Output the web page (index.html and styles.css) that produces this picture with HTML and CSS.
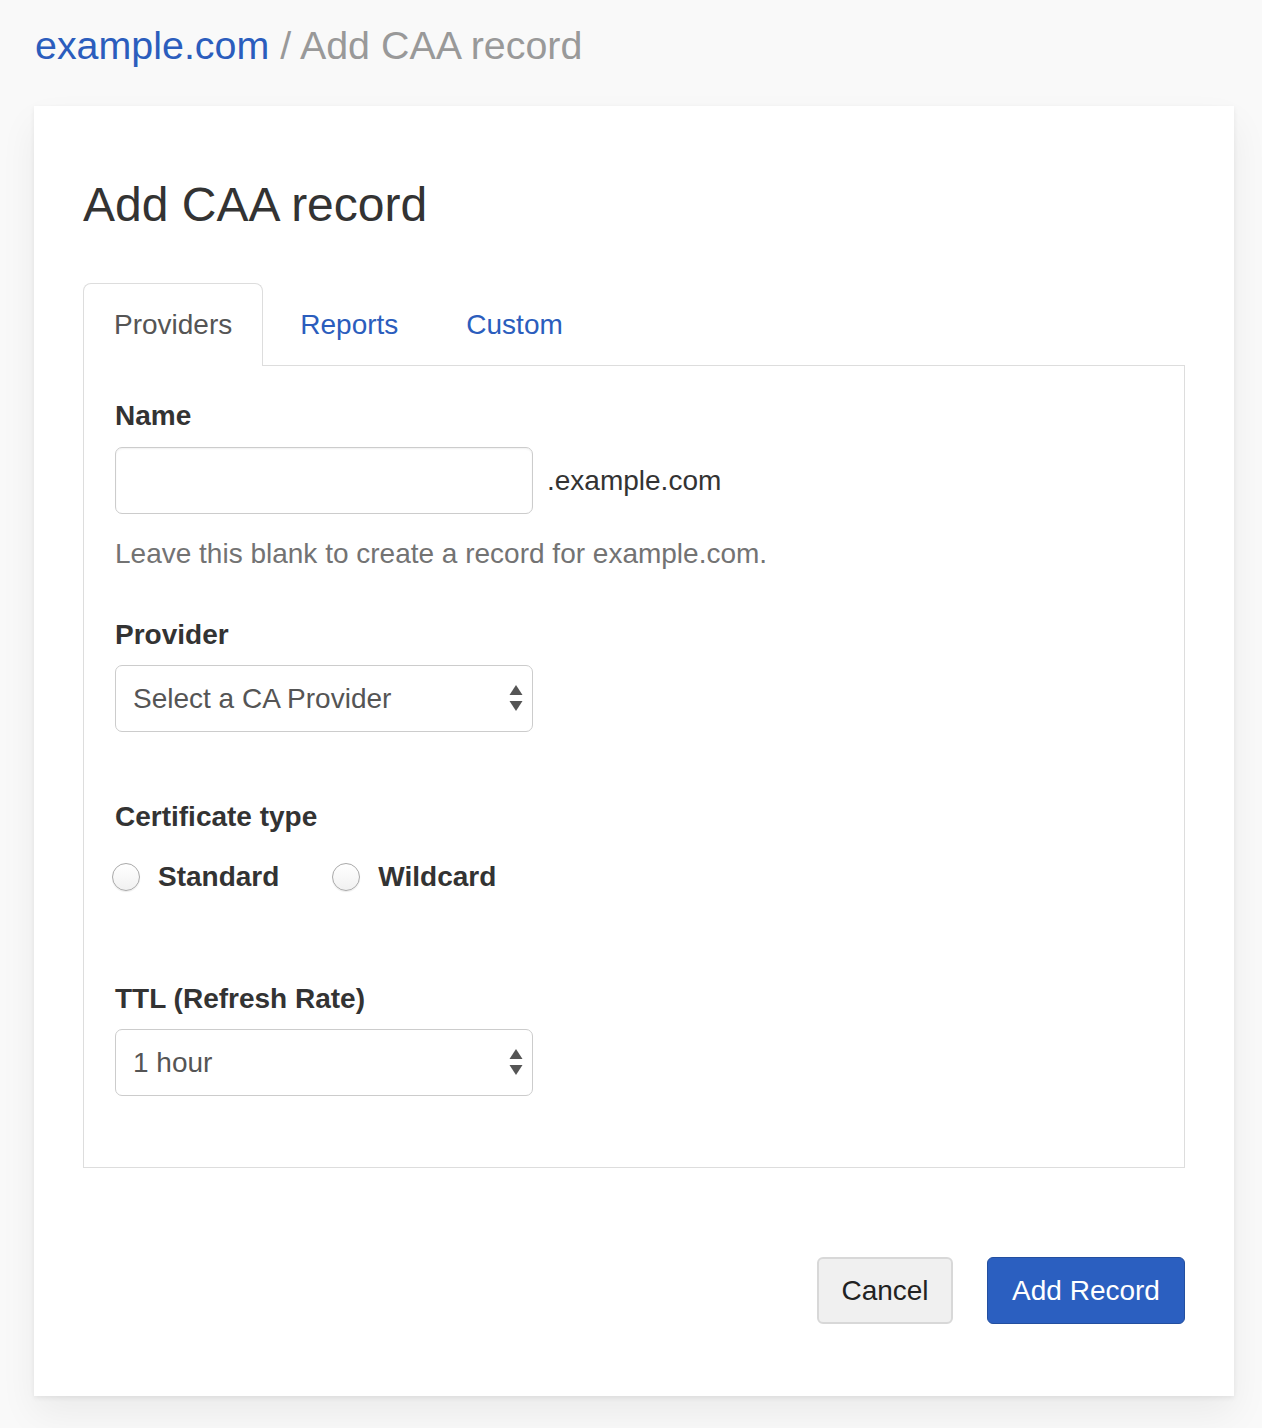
FILE: index.html
```html
<!DOCTYPE html>
<html lang="en">
<head>
<meta charset="utf-8">
<title>Add CAA record</title>
<link rel="stylesheet" href="styles.css">
</head>
<body>
<div class="page">
  <div class="crumbs"><a class="crumb-link" href="#">example.com</a> <span class="crumb-sep">/</span> <span class="crumb-current">Add CAA record</span></div>
  <div class="card">
    <h1 class="title">Add CAA record</h1>
    <ul class="tabs">
      <li class="tab active"><a href="#">Providers</a></li>
      <li class="tab"><a href="#">Reports</a></li>
      <li class="tab"><a href="#">Custom</a></li>
    </ul>
    <div class="panel">
      <label class="label">Name</label>
      <div class="input-row">
        <input class="control" type="text">
        <span class="suffix">.example.com</span>
      </div>
      <p class="help">Leave this blank to create a record for example.com.</p>

      <label class="label label-provider">Provider</label>
      <div class="select-wrap">
        <select class="control select"><option>Select a CA Provider</option></select>
        <svg class="arrows" width="14" height="26" viewBox="0 0 14 26"><path d="M7 0 L13.5 10 L0.5 10 Z" fill="#555"/><path d="M7 26 L13.5 16 L0.5 16 Z" fill="#555"/></svg>
      </div>

      <div class="label label-cert">Certificate type</div>
      <div class="radios">
        <label class="radio"><span class="radio-dot"></span><span class="radio-text">Standard</span></label>
        <label class="radio"><span class="radio-dot"></span><span class="radio-text">Wildcard</span></label>
      </div>

      <label class="label label-ttl">TTL (Refresh Rate)</label>
      <div class="select-wrap">
        <select class="control select"><option>1 hour</option></select>
        <svg class="arrows" width="14" height="26" viewBox="0 0 14 26"><path d="M7 0 L13.5 10 L0.5 10 Z" fill="#555"/><path d="M7 26 L13.5 16 L0.5 16 Z" fill="#555"/></svg>
      </div>
    </div>
    <div class="actions">
      <button class="btn btn-cancel" type="button">Cancel</button>
      <button class="btn btn-primary" type="button">Add Record</button>
    </div>
  </div>
</div>
</body>
</html>
```
FILE: styles.css
```css
html, body {
  margin: 0;
  padding: 0;
  background: #f9f9f9;
}
body {
  font-family: "Liberation Sans", Arial, Helvetica, sans-serif;
  font-size: 28px;
  line-height: 40px;
  color: #333;
}
.page {
  padding: 23px 28px 40px 34px;
}
.crumbs {
  font-size: 39.4px;
  line-height: 44px;
  color: #999;
  margin-left: 1px;
  margin-bottom: 39px;
  white-space: nowrap;
}
.crumb-link {
  color: #2b5dbd;
  text-decoration: none;
}
.card {
  width: 1200px;
  box-sizing: border-box;
  background: #fff;
  padding: 72px 49px 72px 49px;
  box-shadow: 0 2px 5px rgba(0, 0, 0, 0.07), 0 18px 36px rgba(0, 0, 0, 0.06);
}
.title {
  margin: 0;
  font-size: 48px;
  line-height: 53px;
  font-weight: 400;
  color: #333;
}
.tabs {
  list-style: none;
  margin: 52px 0 0 0;
  padding: 0;
  display: flex;
  gap: 6px;
  border-bottom: 1px solid #ddd;
}
.tab {
  margin-bottom: -1px;
}
.tab a {
  display: block;
  padding: 21px 30px 20px 30px;
  border: 1px solid transparent;
  border-bottom: 0;
  border-radius: 8px 8px 0 0;
  color: #2b5dbd;
  text-decoration: none;
}
.tab.active a {
  color: #555;
  border-color: #ddd;
  background: #fff;
  padding-bottom: 21px;
}
.panel {
  border: 1px solid #ddd;
  border-top: 0;
  padding: 30px 31px 71px 31px;
}
.label {
  display: block;
  font-weight: 700;
  color: #333;
  margin-bottom: 11px;
}
.input-row {
  display: flex;
  align-items: center;
  gap: 14px;
}
.control {
  box-sizing: border-box;
  width: 418px;
  height: 67px;
  border: 1px solid #ccc;
  border-radius: 7px;
  background: #fff;
  font-family: inherit;
  font-size: 28px;
  color: #555;
  padding: 0 17px;
  margin: 0;
  box-shadow: inset 0 1px 2px rgba(0, 0, 0, 0.06);
}
.suffix {
  color: #333;
}
.help {
  margin: 20px 0 0 0;
  color: #737373;
}
.label-provider {
  margin-top: 41px;
  margin-bottom: 10px;
}
.select-wrap {
  position: relative;
  width: 418px;
}
.select {
  appearance: none;
  -webkit-appearance: none;
  display: block;
  box-shadow: none;
}
.arrows {
  position: absolute;
  right: 10px;
  top: 20px;
  pointer-events: none;
}
.label-cert {
  margin-top: 65px;
  margin-bottom: 0;
}
.radios {
  margin-top: 20px;
  display: flex;
  gap: 53px;
  margin-left: -3px;
}
.radio {
  display: flex;
  align-items: center;
  gap: 18px;
  font-weight: 700;
  color: #333;
}
.radio-dot {
  display: block;
  box-sizing: border-box;
  width: 28px;
  height: 28px;
  border-radius: 50%;
  border: 1px solid #a9a9a9;
  background: linear-gradient(#ffffff, #f1f1f1);
  box-shadow: 0 1px 1px rgba(0, 0, 0, 0.08);
}
.label-ttl {
  margin-top: 82px;
  margin-bottom: 10px;
}
.actions {
  margin-top: 89px;
  display: flex;
  justify-content: flex-end;
  gap: 34px;
}
.btn {
  height: 67px;
  padding: 0 24px;
  font-family: inherit;
  font-size: 28px;
  border-radius: 6px;
  cursor: pointer;
}
.btn-cancel {
  width: 136px;
  padding: 0;
  background: #f0f0f0;
  border: 2px solid #d8d8d8;
  color: #222;
}
.btn-primary {
  width: 198px;
  padding: 0;
  background: #2b5fc0;
  border: 1px solid #234f9f;
  color: #fff;
}
```
